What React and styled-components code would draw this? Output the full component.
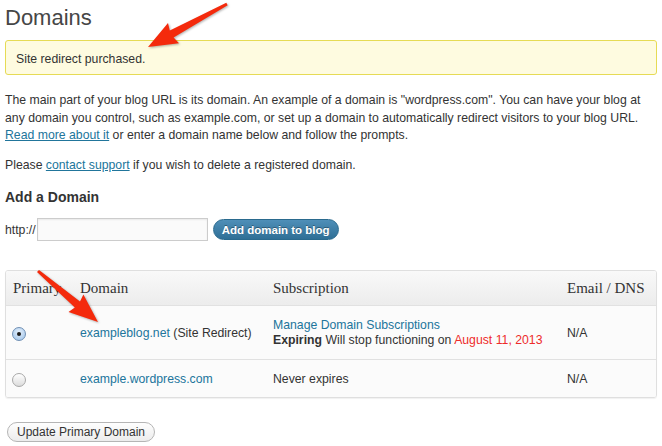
import styled, { createGlobalStyle } from "styled-components";

const Global = createGlobalStyle`
  html, body { margin:0; padding:0; background:#fff; }
  body { font-family: "Liberation Sans", Arial, sans-serif; font-size:12.25px; color:#333; }
`;

const Page = styled.div`
  position:relative; width:662px; height:446px; overflow:hidden;
  padding:0 5px; box-sizing:border-box;
`;

const Title = styled.h2`
  margin:0; padding-top:3px;
  font-size:22px; font-weight:normal; line-height:30px; color:#464646;
`;

const Notice = styled.div`
  margin-top:7px; width:652px; box-sizing:border-box;
  background:#fefbe0; border:1px solid #e6db55; border-radius:3px;
  padding:9px 10px 6px; line-height:18px;
`;

const Para = styled.p`
  margin:${(p) => p.$top || 0}px 0 0; line-height:17.5px;
`;

const Link = styled.a`
  color:#21759b; text-decoration:${(p) => (p.$plain ? "none" : "underline")};
`;

const Heading = styled.h3`
  margin:13.5px 0 0; font-size:14px; font-weight:bold; line-height:18px; color:#333;
`;

const AddRow = styled.div`
  display:flex; align-items:center; margin-top:12px; height:23px;
`;

const UrlInput = styled.input`
  width:171px; height:23px; box-sizing:border-box; margin:0 0 0 1px;
  border:1px solid #ccc; background:#fafafa; box-shadow: inset 0 1px 2px rgba(0,0,0,.07);
`;

const BlueButton = styled.button`
  margin-left:5px; height:21px; padding:0 8px; border-radius:11px;
  border:1px solid #2a6a8e;
  background:linear-gradient(#4f8fb8, #2f6f96);
  color:#fff; font-family:"Liberation Sans", Arial, sans-serif; font-weight:bold; font-size:11.5px;
  text-shadow:0 -1px 0 rgba(0,0,0,.35);
`;

const Table = styled.div`
  margin-top:29px; width:652px; box-sizing:border-box;
  border:1px solid #dfdfdf; border-radius:3px; overflow:hidden;
  box-shadow:0 1px 1px rgba(0,0,0,.06);
`;

const Row = styled.div`
  display:grid; grid-template-columns:67px 193px 294px 1fr;
  align-items:center; height:${(p) => p.$h}px;
  background:${(p) => (p.$head ? "linear-gradient(#f9f9f9, #ececec)" : "#fbfbfb")};
  border-top:${(p) => (p.$first ? "none" : "1px solid #e1e1e1")};
`;

const Cell = styled.div`
  padding:0 7px; line-height:${(p) => (p.$lh ? p.$lh : 16)}px;
`;

const RadioCell = styled(Cell)`
  padding:${(p) => (p.$down ? "3px" : "1px")} 0 0 6px;
`;

const HeadCell = styled(Cell)`
  font-family:"Liberation Serif", Georgia, serif; font-size:15px; color:#333;
`;

const Radio = styled.span`
  width:14px; height:14px; border-radius:50%; box-sizing:border-box;
  border:1px solid ${(p) => (p.$on ? "#6f8fb4" : "#a8a8a8")};
  background:${(p) => (p.$on ? "radial-gradient(circle at 50% 35%, #e4f0fc, #9cc1e8)" : "linear-gradient(#fff, #dcdcdc)")};
  display:flex; align-items:center; justify-content:center;
  &::after { content:""; width:4px; height:4px; border-radius:50%; background:#1b1b1b; display:${(p) => (p.$on ? "block" : "none")}; }
`;

const Strong = styled.b`
  color:#333;
`;

const Red = styled.span`
  color:#ee2b2b;
`;

const GrayButton = styled.button`
  margin:24px 0 0 2px; height:20px; padding:0 9px; border-radius:10px;
  border:1px solid #b5b5b5; background:linear-gradient(#fefefe, #ececec);
  color:#333; font-family:"Liberation Sans", Arial, sans-serif; font-size:12px;
`;

const Overlay = styled.svg`
  position:absolute; left:0; top:0; pointer-events:none;
  filter:drop-shadow(1px 1px 1px rgba(0,0,0,.3));
`;

function arrowPoints(x1, y1, x2, y2) {
  const dx = x2 - x1, dy = y2 - y1;
  const len = Math.hypot(dx, dy);
  const ux = dx / len, uy = dy / len;
  const px = -uy, py = ux;
  const hl = 27, hw = 11.5;
  const bx = x2 - ux * hl, by = y2 - uy * hl;
  const pts = [
    [x1 + px * 1.5, y1 + py * 1.5],
    [bx + px * 4, by + py * 4],
    [bx + px * hw - ux * 2, by + py * hw - uy * 2],
    [x2, y2],
    [bx - px * hw - ux * 2, by - py * hw - uy * 2],
    [bx - px * 4, by - py * 4],
    [x1 - px * 1.5, y1 - py * 1.5],
  ];
  return pts.map((p) => p.map((v) => v.toFixed(1)).join(",")).join(" ");
}

export default function App() {
  return (
    <Page>
      <Global />
      <Title>Domains</Title>
      <Notice>Site redirect purchased.</Notice>
      <Para $top={17}>
        The main part of your blog URL is its domain. An example of a domain is "wordpress.com". You can have your blog at
        <br />
        any domain you control, such as example.com, or set up a domain to automatically redirect visitors to your blog URL.
        <br />
        <Link href="#">Read more about it</Link> or enter a domain name below and follow the prompts.
      </Para>
      <Para $top={12.5}>
        Please <Link href="#">contact support</Link> if you wish to delete a registered domain.
      </Para>
      <Heading>Add a Domain</Heading>
      <AddRow>
        http://
        <UrlInput type="text" />
        <BlueButton>Add domain to blog</BlueButton>
      </AddRow>
      <Table>
        <Row $head $first $h={34}>
          <HeadCell>Primary</HeadCell>
          <HeadCell>Domain</HeadCell>
          <HeadCell>Subscription</HeadCell>
          <HeadCell>Email / DNS</HeadCell>
        </Row>
        <Row $h={53}>
          <RadioCell $down><Radio $on /></RadioCell>
          <Cell><Link $plain href="#">exampleblog.net</Link> (Site Redirect)</Cell>
          <Cell $lh={15}>
            <Link $plain href="#">Manage Domain Subscriptions</Link>
            <br />
            <Strong>Expiring</Strong> Will stop functioning on <Red>August 11, 2013</Red>
          </Cell>
          <Cell>N/A</Cell>
        </Row>
        <Row $h={37}>
          <RadioCell $down><Radio /></RadioCell>
          <Cell><Link $plain href="#">example.wordpress.com</Link></Cell>
          <Cell>Never expires</Cell>
          <Cell>N/A</Cell>
        </Row>
      </Table>
      <GrayButton>Update Primary Domain</GrayButton>
      <Overlay width="662" height="446">
        <polygon points={arrowPoints(227, 4, 148, 47)} fill="#f42a0c" />
        <polygon points={arrowPoints(38, 271, 98, 322)} fill="#f42a0c" />
      </Overlay>
    </Page>
  );
}
